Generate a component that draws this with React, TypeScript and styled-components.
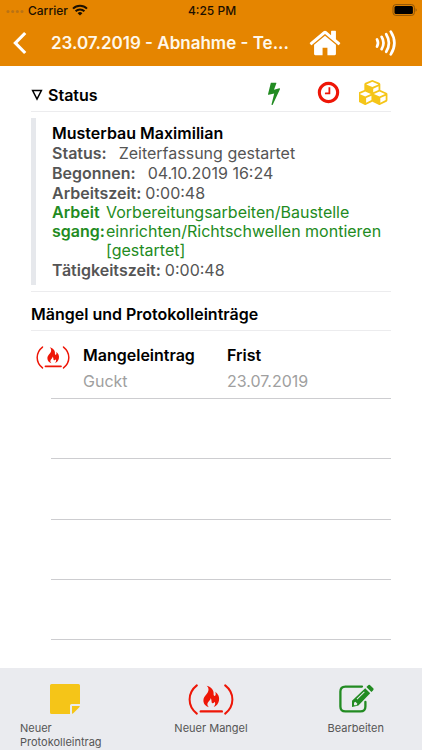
import React from 'react';
import styled, { createGlobalStyle } from 'styled-components';

const color = {
  orange: '#e58500',
  green: '#228b22',
  red: '#ee1607',
  yellow: '#f5c518',
  panel: '#eaebef',
  text: '#555555',
};

const GlobalStyle = createGlobalStyle`
  *, *::before, *::after { box-sizing: border-box; }
  body { margin: 0; background: #fff; font-family: Inter, 'Liberation Sans', sans-serif; }
  button { font: inherit; color: inherit; background: none; border: 0; padding: 0; margin: 0; cursor: pointer; }
  h1, h2, p, dl, dd, dt, ul { margin: 0; padding: 0; }
  svg { display: block; flex: none; }
`;

const Screen = styled.div`
  min-height: 100vh;
  display: flex;
  flex-direction: column;
`;

const Header = styled.header`
  background: ${color.orange};
  color: #fff8ea;
`;

const StatusBar = styled.div`
  display: grid;
  grid-template-columns: 1fr auto 1fr;
  align-items: center;
  height: 20px;
  padding: 0 4px 0 6px;
  font-size: 12px;
  font-weight: 500;
  color: #1c1000;
`;

const Carrier = styled.div`
  display: flex;
  align-items: center;
  gap: 4px;
`;

const BatterySlot = styled.div`
  display: flex;
  justify-content: flex-end;
`;

const NavBar = styled.nav`
  display: flex;
  align-items: center;
  height: 46px;
  padding: 0 25px 0 12px;
`;

const NavTitle = styled.h1`
  flex: 1;
  min-width: 0;
  margin: 0 20px 0 24px;
  font-size: 17px;
  line-height: 24px;
  font-weight: 600;
  white-space: nowrap;
`;

const IconButton = styled.button`
  display: flex;
  align-items: center;
  justify-content: center;
`;

const NavActions = styled.div`
  display: flex;
  align-items: center;
  gap: 33px;
`;

const Content = styled.main`
  flex: 1;
  display: flex;
  flex-direction: column;
  padding: 0 31px 28px;
`;

const StatusHeading = styled.div`
  display: flex;
  align-items: center;
  justify-content: space-between;
  height: 46px;
  padding-top: 12px;
  border-bottom: 1px solid #ececee;
`;

const Toggle = styled.button`
  display: flex;
  align-items: center;
  gap: 5px;
  font-size: 16px;
  font-weight: 600;
  color: #000;
`;

const StatusActions = styled.div`
  display: flex;
  align-items: center;
  padding-bottom: 4px;
`;

const StatusAction = styled(IconButton)<{ $width: number }>`
  width: ${(p) => p.$width}px;
  height: 28px;
`;

const Details = styled.section`
  margin: 6px 0;
  padding: 5px 0 5px 16px;
  border-left: 5px solid #e6e8ec;
  font-size: 16px;
  line-height: 20px;
  color: ${color.text};
`;

const PersonName = styled.h2`
  font-size: 16px;
  line-height: 20px;
  font-weight: 600;
  color: #000;
`;

const Entry = styled.div<{ $gap: number }>`
  display: flex;
  gap: ${(p) => p.$gap}px;
`;

const Term = styled.dt`
  font-weight: 600;
`;

const TaskEntry = styled.div`
  display: grid;
  grid-template-columns: 54px 1fr;
  line-height: 19px;
  color: ${color.green};
`;

const ListTitle = styled.h2`
  padding: 12px 0 6px;
  border-top: 1px solid #ececee;
  border-bottom: 1px solid #ececee;
  font-size: 16px;
  line-height: 20px;
  font-weight: 600;
`;

const List = styled.ul`
  flex: 1;
  display: flex;
  flex-direction: column;
  list-style: none;
`;

const Item = styled.li`
  display: grid;
  grid-template-columns: 52px 144px 1fr;
`;

const ItemIcon = styled.div`
  grid-row: 1 / 3;
  padding: 15px 0 0 5px;
`;

const ItemLabel = styled.div`
  padding-top: 12px;
  font-size: 16px;
  line-height: 24px;
  font-weight: 600;
`;

const ItemValue = styled.div`
  padding: 2px 0 5px;
  font-size: 16px;
  line-height: 24px;
  color: #a0a0a0;
`;

const Rule = styled.div`
  grid-column: 1 / -1;
  margin-left: 20px;
  border-bottom: 1px solid #cdcdd0;
`;

const EmptyItem = styled.li`
  flex: 1;
  min-height: 48px;
  margin-left: 20px;
  border-bottom: 1px solid #cdcdd0;
`;

const Toolbar = styled.footer`
  display: grid;
  grid-template-columns: repeat(3, 1fr);
  align-items: start;
  height: 82px;
  padding: 14px 20px 0;
  background: ${color.panel};
`;

const ToolButton = styled.button`
  justify-self: center;
  display: flex;
  flex-direction: column;
  align-items: center;
  gap: 5px;
  font-size: 11px;
  line-height: 14px;
  color: ${color.text};
  text-align: left;
`;

const NoteButton = styled(ToolButton)`
  justify-self: start;
  width: 90px;
`;

const EditButton = styled(ToolButton)`
  justify-self: end;
  margin-right: 18px;
`;

const NoteLabel = styled.span`
  align-self: stretch;
`;

const ToolIcon = styled.span`
  display: flex;
  align-items: center;
  justify-content: center;
  height: 34px;
`;

const Wifi = () => (
  <svg width="16" height="12" viewBox="0 0 16 12" fill="none" stroke="#1c1000" strokeWidth="2">
    <path d="M1 4.6a10 10 0 0 1 14 0" />
    <path d="M3.6 7.3a6.2 6.2 0 0 1 8.8 0" />
    <path d="M8 11.6 5.6 9.2a3.4 3.4 0 0 1 4.8 0z" fill="#1c1000" stroke="none" />
  </svg>
);

const Signal = () => (
  <svg width="18" height="6" viewBox="0 0 18 6" fill="#b97214">
    <circle cx="2" cy="4.4" r="1.5" />
    <circle cx="6.7" cy="4.4" r="1.5" />
    <circle cx="11.4" cy="4.4" r="1.5" />
    <circle cx="16" cy="4.4" r="1.5" />
  </svg>
);

const Battery = () => (
  <svg width="26" height="12" viewBox="0 0 26 12">
    <rect x="1" y=".6" width="21.4" height="10.8" rx="2.8" fill="none" stroke="#8d5508" />
    <rect x="2.5" y="2.1" width="18.4" height="7.8" rx="1.5" fill="#000" />
    <path d="M23.6 4.2v3.6c1.4-.6 1.4-3 0-3.6z" fill="#8d5508" />
  </svg>
);

const Back = () => (
  <svg width="15" height="24" viewBox="0 0 15 24" fill="none" stroke="#fff" strokeWidth="3.2">
    <path d="M13.2 2 3.4 12l9.8 10" />
  </svg>
);

const Home = () => (
  <svg width="34" height="34" viewBox="0 0 1792 1792" fill="#fff">
    <path d="M1472 992v480q0 26-19 45t-45 19h-384v-384h-256v384h-384q-26 0-45-19t-19-45v-480q0-1 .5-3t.5-3l575-474 575 474q1 2 1 6zm223-69l-62 74q-8 9-21 11h-3q-13 0-21-7l-692-577-692 577q-12 8-24 7-13-2-21-11l-62-74q-8-10-7-23.5t11-21.5l719-599q32-26 76-26t76 26l244 204v-195q0-14 9-23t23-9h192q14 0 23 9t9 23v408l219 182q10 8 11 21.5t-7 23.5z" />
  </svg>
);

const Waves = () => (
  <svg width="22" height="28" viewBox="0 0 22 28" fill="none" stroke="#fff" strokeWidth="2.7" strokeLinecap="round">
    <path d="M2 10.4q2 3.6 0 7.2" />
    <path d="M6.6 7.8q3.8 6.2 0 12.4" />
    <path d="M11.2 5.2q5.4 8.8 0 17.6" />
    <path d="M15.8 2.6q7.2 11.4 0 22.8" />
  </svg>
);

const Triangle = () => (
  <svg width="12" height="12" viewBox="0 0 12 12" fill="none" stroke="#000" strokeWidth="1.5">
    <path d="M1.6 1.6h8.8L6 10.2z" />
  </svg>
);

const Bolt = () => (
  <svg width="24" height="24" viewBox="0 0 1792 1792" fill={color.green}>
    <path d="M1333 566q18 20 7 44l-540 1157q-13 25-42 25-4 0-14-2-17-5-25.5-19t-4.5-30l197-808-406 101q-4 1-12 1-18 0-31-11-18-15-13-39l201-825q4-16 18-26t32-10h328q19 0 32 12.5t13 29.5q0 8-5 18l-171 463 396-98q8-2 12-2 19 0 34 15z" />
  </svg>
);

const Clock = () => (
  <svg width="25" height="25" viewBox="0 0 1792 1792" fill={color.red}>
    <path d="M1024 544v448q0 14-9 23t-23 9h-320q-14 0-23-9t-9-23v-64q0-14 9-23t23-9h224v-352q0-14 9-23t23-9h64q14 0 23 9t9 23zm416 352q0-148-73-273t-198-198-273-73-273 73-198 198-73 273 73 273 198 198 273 73 273-73 198-198 73-273zm224 0q0 209-103 385.5t-279.5 279.5-385.5 103-385.5-103-279.5-279.5-103-385.5 103-385.5 279.5-279.5 385.5-103 385.5 103 279.5 279.5 103 385.5z" />
  </svg>
);

const Cubes = () => (
  <svg width="32" height="25" viewBox="0 0 2304 1792" fill={color.yellow}>
    <path d="M512 1632l384-192v-314l-384 164v342zm-64-454l404-173-404-173-404 173zm1088 454l384-192v-314l-384 164v342zm-64-454l404-173-404-173-404 173zm-448-293l384-165v-266l-384 164v267zm-64-379l441-189-441-189-441 189zm1088 518v416q0 36-19 67t-52 47l-448 224q-25 14-57 14t-57-14l-448-224q-4-2-7-4-2 2-7 4l-448 224q-25 14-57 14t-57-14l-448-224q-33-16-52-47t-19-67v-416q0-38 21.5-70t56.5-48l434-186v-400q0-38 21.5-70t56.5-48l448-192q23-10 50-10t50 10l448 192q35 16 56.5 48t21.5 70v400l434 186q36 16 57 48t21 70z" />
  </svg>
);

const Flame = ({ width, height }: { width: number; height: number }) => (
  <svg width={width} height={height} viewBox="0 0 46 31" fill={color.red}>
    <g fill="none" stroke={color.red} strokeWidth="2" strokeLinecap="round">
      <path d="M8.8 1.4C-.8 9-.8 22 8.8 29.6" />
      <path d="M37.2 1.4c9.6 7.6 9.6 20.6 0 28.2" />
      <path d="M12.8 27.4h21" strokeWidth="2.4" />
    </g>
    <path d="M18.6 1.8C23.6 3 26 6.6 25.6 9.8c-.1 1.4.4 2.2 1.1 2.1 1.1-.1 1.3-2.1.6-4.1 3.2 2.4 4.3 5.4 3.7 8.8-.5 3-2.3 5.3-5.3 6.5 1.6-2 1.9-3.7 1-5.3-.5 1-1.2 1.5-2.1 1.4-1.6-.3-.5-2.6-1.9-5.2-.1 2.7-3.5 3.9-3.3 6.6.1 1.1.6 1.9 1.5 2.6-3.2-1-5.5-3.4-5.5-6.8 0-4.7 5.4-6.600 5.100-11.200-.1-1.300-.7-2.400-1.900-3.400z" />
  </svg>
);

const Note = () => (
  <svg width="30" height="30" viewBox="0 0 30 30" fill={color.yellow}>
    <path d="M1.6 0h26.8Q30 0 30 1.6V20h-8.4Q20 20 20 21.6V30H1.6Q0 30 0 28.4V1.6Q0 0 1.6 0z" />
    <path d="M22 22h7.800q-.2 1-1 1.800l-5 5q-.8.8-1.800 1z" />
  </svg>
);

const Edit = () => (
  <svg width="36" height="30" viewBox="0 0 36 30">
    <path
      d="M24 2.600H7.400Q2.400 2.600 2.400 7.600v14.800q0 5 5 5h15q5 0 5-5V18"
      fill="none"
      stroke={color.green}
      strokeWidth="2.300"
      strokeLinecap="round"
    />
    <path
      fillRule="evenodd"
      fill={color.green}
      d="M27.200 4.200l5 5L20.400 21.400 14 23V16.800zM16 18.800v2.400h2.400l1-1.400-2-2zM26 7.600l-7.400 7.200.7.7 7.400-7.200z"
    />
    <path fill={color.green} d="M28.400 3l1.600-1.600q1.200-1.200 2.400 0l2.600 2.600q1.200 1.200 0 2.400L33.400 8z" />
  </svg>
);

const emptyItems = [1, 2, 3, 4];

export default function App() {
  return (
    <>
      <GlobalStyle />
      <Screen>
        <Header>
          <StatusBar>
            <Carrier>
              <Signal />
              <span>Carrier</span>
              <Wifi />
            </Carrier>
            <span>4:25 PM</span>
            <BatterySlot>
              <Battery />
            </BatterySlot>
          </StatusBar>
          <NavBar>
            <IconButton aria-label="Zurück">
              <Back />
            </IconButton>
            <NavTitle>23.07.2019 - Abnahme - Te...</NavTitle>
            <NavActions>
              <IconButton aria-label="Startseite">
                <Home />
              </IconButton>
              <IconButton aria-label="NFC">
                <Waves />
              </IconButton>
            </NavActions>
          </NavBar>
        </Header>

        <Content>
          <StatusHeading>
            <Toggle aria-expanded="true">
              <Triangle />
              Status
            </Toggle>
            <StatusActions>
              <StatusAction $width={46} aria-label="Tätigkeit">
                <Bolt />
              </StatusAction>
              <StatusAction $width={62} aria-label="Zeiterfassung">
                <Clock />
              </StatusAction>
              <StatusAction $width={32} aria-label="Material">
                <Cubes />
              </StatusAction>
            </StatusActions>
          </StatusHeading>

          <Details>
            <PersonName>Musterbau Maximilian</PersonName>
            <dl>
              <Entry $gap={12}>
                <Term>Status:</Term>
                <dd>Zeiterfassung gestartet</dd>
              </Entry>
              <Entry $gap={12}>
                <Term>Begonnen:</Term>
                <dd>04.10.2019 16:24</dd>
              </Entry>
              <Entry $gap={4}>
                <Term>Arbeitszeit:</Term>
                <dd>0:00:48</dd>
              </Entry>
              <TaskEntry>
                <Term>
                  Arbeit
                  <br />
                  sgang:
                </Term>
                <dd>
                  Vorbereitungsarbeiten/Baustelle einrichten/Richtschwellen montieren [gestartet]
                </dd>
              </TaskEntry>
              <Entry $gap={4}>
                <Term>Tätigkeitszeit:</Term>
                <dd>0:00:48</dd>
              </Entry>
            </dl>
          </Details>

          <ListTitle>Mängel und Protokolleinträge</ListTitle>
          <List>
            <Item>
              <ItemIcon>
                <Flame width={34} height={23} />
              </ItemIcon>
              <ItemLabel>Mangeleintrag</ItemLabel>
              <ItemLabel>Frist</ItemLabel>
              <ItemValue>Guckt</ItemValue>
              <ItemValue>23.07.2019</ItemValue>
              <Rule />
            </Item>
            {emptyItems.map((n) => (
              <EmptyItem key={n} />
            ))}
          </List>
        </Content>

        <Toolbar>
          <NoteButton>
            <ToolIcon>
              <Note />
            </ToolIcon>
            <NoteLabel>
              Neuer
              <br />
              Protokolleintrag
            </NoteLabel>
          </NoteButton>
          <ToolButton>
            <ToolIcon>
              <Flame width={46} height={31} />
            </ToolIcon>
            <span>Neuer Mangel</span>
          </ToolButton>
          <EditButton>
            <ToolIcon>
              <Edit />
            </ToolIcon>
            <span>Bearbeiten</span>
          </EditButton>
        </Toolbar>
      </Screen>
    </>
  );
}
